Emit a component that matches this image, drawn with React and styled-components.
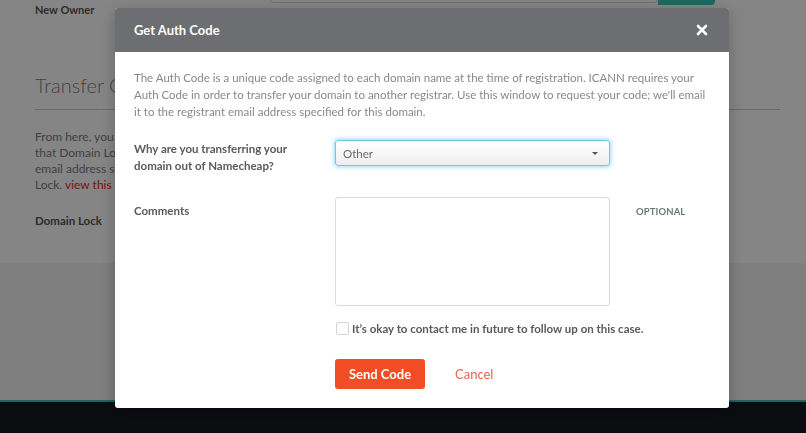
import React, { useState } from 'react';
import styled, { createGlobalStyle } from 'styled-components';

const GlobalStyle = createGlobalStyle`
  html, body {
    margin: 0;
    padding: 0;
    height: 100%;
    overflow: hidden;
  }
  body {
    font-family: 'Lato', 'Liberation Sans', sans-serif;
  }
  * { box-sizing: border-box; }
`;

const Page = styled.div`
  display: flex;
  flex-direction: column;
  height: 100vh;
  background: #16181f;
`;

const MainSection = styled.section`
  height: 263px;
  background: #ffffff;
  padding: 0 26px 0 35px;
  display: flex;
  flex-direction: column;
`;

const OwnerRow = styled.div`
  display: flex;
  align-items: flex-start;
`;

const OwnerLabel = styled.div`
  width: 235px;
  padding-top: 3px;
  font-size: 11px;
  font-weight: 700;
  color: #555;
`;

const OwnerInput = styled.div`
  width: 388px;
  height: 34px;
  margin-top: -31px;
  border: 1px solid #d6d6d6;
  border-radius: 3px;
`;

const OwnerButton = styled.div`
  width: 57px;
  height: 36px;
  margin-top: -31px;
  background: #3ac9bd;
  border-radius: 0 4px 4px 0;
`;

const SectionTitle = styled.h2`
  margin: 56px 0 0;
  font-size: 20px;
  font-weight: 300;
  color: #808080;
  line-height: 26px;
`;

const Divider = styled.hr`
  margin: 11px 0 0;
  border: none;
  border-top: 1px solid #ccc;
`;

// only the start of each line shows beside the dialog
const Para = styled.p`
  margin: 19px 0 0;
  font-size: 12px;
  line-height: 16px;
  color: #7c7c7c;
  white-space: nowrap;
`;

const RedLink = styled.span`
  color: #e8252b;
`;

const LockLabel = styled.div`
  margin-top: 21px;
  font-size: 11.5px;
  font-weight: 700;
  color: #555;
`;

const LowerSection = styled.div`
  height: 139px;
  background: #f3f3f3;
  border-bottom: 2px solid #3ac2b4;
`;

const Footer = styled.footer`
  flex: 1;
  background: #16181f;
`;

const Overlay = styled.div`
  position: fixed;
  inset: 0;
  background: rgba(0, 0, 0, 0.48);
  padding: 8px 0 0 115px;
`;

const Modal = styled.div`
  width: 614px;
  height: 400px;
  background: #fff;
  border-radius: 3px;
  overflow: hidden;
  display: flex;
  flex-direction: column;
  box-shadow: 0 4px 16px rgba(0, 0, 0, 0.25);
`;

const ModalHeader = styled.div`
  height: 44px;
  flex: none;
  background: #6d6e71;
  display: flex;
  align-items: center;
  justify-content: space-between;
  padding: 0 20px 0 19px;
`;

const ModalTitle = styled.h3`
  margin: 0;
  font-size: 13px;
  font-weight: 700;
  color: #fff;
`;

const CloseButton = styled.button`
  border: none;
  background: none;
  padding: 0;
  width: 14px;
  height: 14px;
  display: flex;
  align-items: center;
  justify-content: center;
  cursor: pointer;
`;

const ModalBody = styled.div`
  padding: 17px 19px 19px;
  display: flex;
  flex-direction: column;
`;

const Intro = styled.p`
  margin: 0;
  font-size: 11.5px;
  line-height: 17px;
  color: #86898b;
`;

const FormRow = styled.div`
  display: flex;
  align-items: flex-start;
  margin-top: ${(p) => p.gap || 0}px;
`;

const FieldLabel = styled.label`
  width: 190px;
  margin-right: 11px;
  flex: none;
  padding-top: ${(p) => p.offset || 0}px;
  font-size: 11.5px;
  line-height: 17px;
  font-weight: 700;
  color: #585a5c;
`;

const SelectBox = styled.div`
  width: 275px;
  height: 26px;
  border: 1px solid #6fc8e2;
  border-radius: 3px;
  background: linear-gradient(#ffffff, #eeeeee);
  box-shadow: 0 0 4px 1px rgba(110, 205, 235, 0.7);
  display: flex;
  align-items: center;
  justify-content: space-between;
  padding: 0 11px 0 7px;
  font-size: 11.5px;
  color: #6a6a6a;
`;

const Caret = styled.span`
  width: 0;
  height: 0;
  border-left: 3px solid transparent;
  border-right: 3px solid transparent;
  border-top: 3px solid #555;
`;

const TextArea = styled.textarea`
  width: 275px;
  height: 109px;
  border: 1px solid #d9d9d9;
  border-radius: 3px;
  resize: none;
  outline: none;
  font-family: inherit;
`;

const Hint = styled.div`
  margin-left: 26px;
  padding-top: 9px;
  font-size: 9.5px;
  font-weight: 700;
  color: #6d787a;
  letter-spacing: 0.1px;
`;

const CheckRow = styled.label`
  display: flex;
  align-items: center;
  margin: 16px 0 0 202px;
  font-size: 11.5px;
  font-weight: 700;
  color: #585a5c;
  gap: 3px;
`;

const CheckBox = styled.span`
  width: 13px;
  height: 13px;
  border: 1px solid #d4d4d4;
  border-radius: 2px;
  background: #fff;
`;

const Actions = styled.div`
  display: flex;
  align-items: center;
  gap: 30px;
  margin: 24px 0 0 201px;
`;

const SendButton = styled.button`
  width: 90px;
  height: 30px;
  border: none;
  border-radius: 3px;
  background: #f24d24;
  color: #fff;
  font-family: inherit;
  font-size: 13px;
  font-weight: 700;
  cursor: pointer;
`;

const CancelLink = styled.a`
  font-size: 13px;
  color: #e8664c;
  cursor: pointer;
`;

export default function App() {
  const [reason] = useState('Other');

  return (
    <>
      <GlobalStyle />
      <Page>
        <MainSection>
          <OwnerRow>
            <OwnerLabel>New Owner</OwnerLabel>
            <OwnerInput />
            <OwnerButton />
          </OwnerRow>
          <SectionTitle>Transfer Out</SectionTitle>
          <Divider />
          <Para>
            From here, you
            <br />
            that Domain Lo
            <br />
            email address s
            <br />
            Lock. <RedLink>view this</RedLink>
          </Para>
          <LockLabel>Domain Lock</LockLabel>
        </MainSection>
        <LowerSection />
        <Footer />
      </Page>

      <Overlay>
        <Modal>
          <ModalHeader>
            <ModalTitle>Get Auth Code</ModalTitle>
            <CloseButton aria-label="Close">
              <svg width="12" height="12" viewBox="0 0 12 12">
                <path d="M2 2 L10 10 M10 2 L2 10" stroke="#fff" strokeWidth="2.6" strokeLinecap="round" />
              </svg>
            </CloseButton>
          </ModalHeader>
          <ModalBody>
            <Intro>
              The Auth Code is a unique code assigned to each domain name at the time of registration. ICANN requires your
              Auth Code in order to transfer your domain to another registrar. Use this window to request your code; we'll email
              it to the registrant email address specified for this domain.
            </Intro>
            <FormRow gap={20}>
              <FieldLabel>
                Why are you transferring your
                <br />
                domain out of Namecheap?
              </FieldLabel>
              <SelectBox>
                <span>{reason}</span>
                <Caret />
              </SelectBox>
            </FormRow>
            <FormRow gap={23}>
              <FieldLabel offset={5}>Comments</FieldLabel>
              <TextArea />
              <Hint>OPTIONAL</Hint>
            </FormRow>
            <CheckRow>
              <CheckBox />
              It’s okay to contact me in future to follow up on this case.
            </CheckRow>
            <Actions>
              <SendButton>Send Code</SendButton>
              <CancelLink>Cancel</CancelLink>
            </Actions>
          </ModalBody>
        </Modal>
      </Overlay>
    </>
  );
}
